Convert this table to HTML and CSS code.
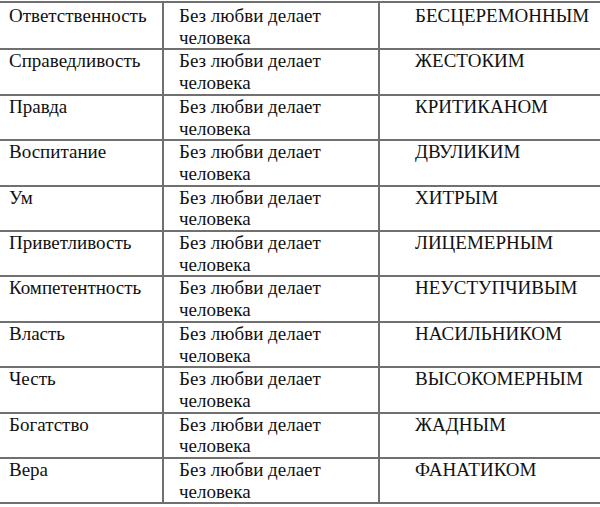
FILE: index.html
```html
<!DOCTYPE html>
<html lang="ru">
<head>
<meta charset="utf-8">
<link rel="stylesheet" href="styles.css">
</head>
<body>
<table class="virtues">
  <colgroup>
    <col class="c1"><col class="c2"><col class="c3">
  </colgroup>
  <tbody>
    <tr class="first"><td class="name">Ответственность</td><td class="desc">Без любви делает человека</td><td class="result">БЕСЦЕРЕМОННЫМ</td></tr>
    <tr><td class="name">Справедливость</td><td class="desc">Без любви делает человека</td><td class="result">ЖЕСТОКИМ</td></tr>
    <tr><td class="name">Правда</td><td class="desc">Без любви делает человека</td><td class="result">КРИТИКАНОМ</td></tr>
    <tr><td class="name">Воспитание</td><td class="desc">Без любви делает человека</td><td class="result">ДВУЛИКИМ</td></tr>
    <tr><td class="name">Ум</td><td class="desc">Без любви делает человека</td><td class="result">ХИТРЫМ</td></tr>
    <tr><td class="name">Приветливость</td><td class="desc">Без любви делает человека</td><td class="result">ЛИЦЕМЕРНЫМ</td></tr>
    <tr><td class="name">Компетентность</td><td class="desc">Без любви делает человека</td><td class="result">НЕУСТУПЧИВЫМ</td></tr>
    <tr><td class="name">Власть</td><td class="desc">Без любви делает человека</td><td class="result">НАСИЛЬНИКОМ</td></tr>
    <tr><td class="name">Честь</td><td class="desc">Без любви делает человека</td><td class="result">ВЫСОКОМЕРНЫМ</td></tr>
    <tr><td class="name">Богатство</td><td class="desc">Без любви делает человека</td><td class="result">ЖАДНЫМ</td></tr>
    <tr><td class="name">Вера</td><td class="desc">Без любви делает человека</td><td class="result">ФАНАТИКОМ</td></tr>
  </tbody>
</table>
</body>
</html>
```
FILE: styles.css
```css
html, body {
  margin: 0;
  padding: 0;
  background: #fff;
  overflow: hidden;
}
body {
  width: 600px;
  height: 507px;
}
.virtues {
  border-collapse: separate;
  border-spacing: 0;
  table-layout: fixed;
  width: 600px;
  margin: 1px 0 0 0;
  border-top: 2px solid #707070;
  font-family: "Liberation Serif", "Times New Roman", serif;
  font-size: 19px;
  color: #111;
}
.c1 { width: 164px; }
.c2 { width: 216px; }
.c3 { width: 220px; }
.virtues td {
  padding: 0;
  line-height: 21.7px;
  height: 43.4px;
  vertical-align: top;
  border-bottom: 2px solid #707070;
  white-space: nowrap;
}
.virtues .name {
  padding-left: 9px;
  border-right: 2px solid #707070;
}
.virtues .desc {
  padding-left: 15px;
  padding-right: 40px;
  border-right: 2px solid #707070;
  white-space: normal;
}
.virtues .result {
  padding-left: 35px;
}
.virtues .first td {
  padding-top: 2px;
}
```
